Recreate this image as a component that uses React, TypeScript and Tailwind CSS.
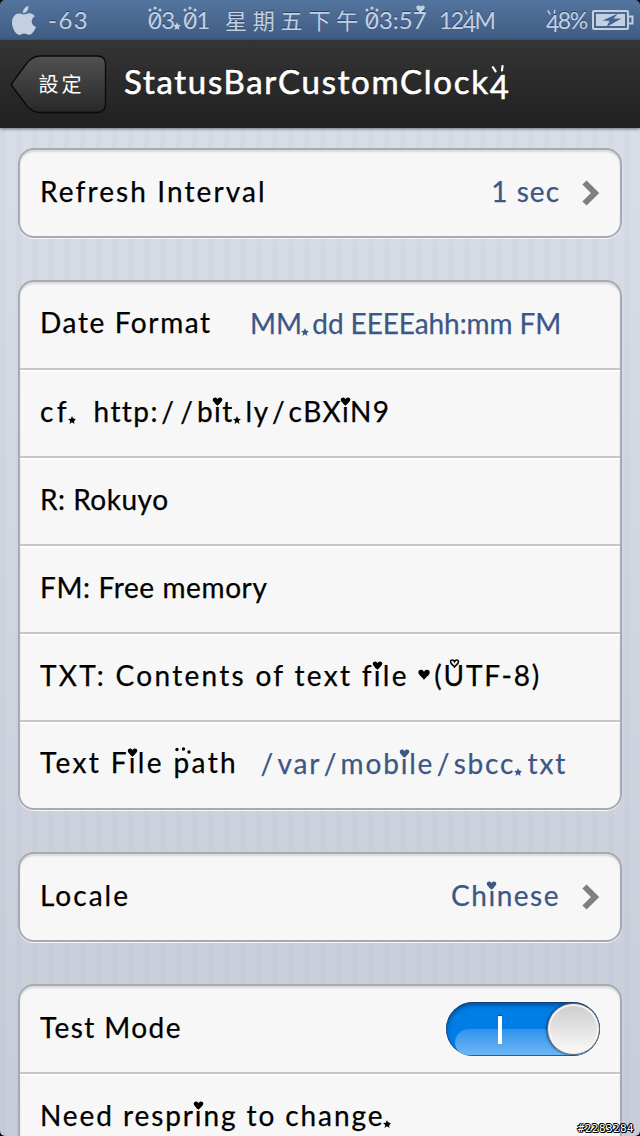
import type { ReactNode } from "react";

const STRIPES =
  "bg-[repeating-linear-gradient(90deg,rgba(120,140,170,0.045)_0px,rgba(120,140,170,0.045)_6px,transparent_6px,transparent_16px),linear-gradient(180deg,#d8dde7,#c7ccd8)]";

function Heart({ className }: { className: string }) {
  return (
    <svg viewBox="0 0 10 9" className={className} fill="currentColor">
      <path d="M5 9 C4 7 0 5 0.3 2.4 C0.6 0.2 4 -0.4 5 2.2 C6 -0.4 9.6 0.2 9.8 2.4 C10 5 6 7 5 9Z" />
    </svg>
  );
}

// Small ornaments that sit on top of certain characters
function Char({ c }: { c: string }) {
  if (c === "i") {
    return (
      <span className="relative">
        i
        <Heart className="absolute -left-[2px] top-[3px] h-[9px] w-[11px]" />
      </span>
    );
  }
  if (c === "7") {
    return (
      <span className="relative">
        7
        <Heart className="absolute left-[3px] top-0 h-[8px] w-[9px]" />
      </span>
    );
  }
  if (c === "/") {
    return <span className="mx-[2.5px]">/</span>;
  }
  if (c === ".") {
    return (
      <span className="relative mr-1">
        .
        <svg viewBox="0 0 10 10" className="absolute -left-[1px] bottom-[4px] h-[8px] w-[8px]" fill="currentColor">
          <path d="M5 0 L6.4 3.5 L10 3.8 L7.2 6.2 L8.1 10 L5 7.9 L1.9 10 L2.8 6.2 L0 3.8 L3.6 3.5Z" />
        </svg>
      </span>
    );
  }
  if (c === "0") {
    return (
      <span className="relative">
        0
        <svg viewBox="0 0 14 26" className="absolute left-0 top-[1px] h-[26px] w-[14px]" fill="currentColor">
          <circle cx="2" cy="4" r="1.5" />
          <circle cx="7" cy="2" r="1.6" />
          <circle cx="12" cy="4" r="1.5" />
          <path d="M4 19 L10 9" stroke="currentColor" strokeWidth="1.6" />
        </svg>
      </span>
    );
  }
  // the four hangs below the baseline, with two ticks above it
  if (c === "4") {
    return (
      <span className="relative inline-block translate-y-[0.15em]">
        4
        <svg viewBox="0 0 14 8" className="absolute left-0 -top-[0.02em] h-[0.26em] w-[0.5em]" fill="none" stroke="currentColor" strokeWidth="2" strokeLinecap="round">
          <path d="M2 2 L4.5 6 M11 1 L10.5 5" />
        </svg>
      </span>
    );
  }
  if (c === "U") {
    return (
      <span className="relative">
        U
        <svg viewBox="0 0 10 9" className="absolute left-[5px] top-[1px] h-[9px] w-[11px]" fill="none" stroke="currentColor" strokeWidth="1.6">
          <path d="M5 8 C4 6.5 1 5 1 2.6 C1 0.6 4 0.4 5 2.6 C6 0.4 9 0.6 9 2.6 C9 5 6 6.5 5 8Z" />
        </svg>
      </span>
    );
  }
  return <>{c}</>;
}

function Fancy({ text, className = "" }: { text: string; className?: string }) {
  return (
    <span className={"shrink-0 whitespace-pre " + className}>
      {text.split("").map((c, i) => (
        <Char key={i} c={c} />
      ))}
    </span>
  );
}

function Card({ children }: { children: ReactNode }) {
  return (
    <section className="shrink-0 overflow-hidden rounded-[16px] border-2 border-[#a5aab3] bg-[#f7f7f7] shadow-[0_1px_0_#f4f6f9,inset_0_2px_2px_rgba(0,0,0,0.12)]">
      {children}
    </section>
  );
}

function Row({ children, last = false }: { children: ReactNode; last?: boolean }) {
  return (
    <div
      className={
        "flex items-center px-5 pb-[5px] text-[28px] leading-[34px] text-black [-webkit-text-stroke:0.25px_currentColor] " +
        (last ? "h-[86px]" : "h-[88px] border-b-2 border-[#c6c6c6] shadow-[0_2px_0_#ffffff]")
      }
    >
      {children}
    </div>
  );
}

function Chevron() {
  return (
    <svg viewBox="0 0 18 26" className="ml-[22px] mt-[5px] h-[26px] w-[18px] shrink-0" fill="none" stroke="#7f7f7f" strokeWidth="6">
      <path d="M2.5 2.5 L13 13 L2.5 23.5" />
    </svg>
  );
}

function Switch() {
  return (
    <div className="relative mt-[5px] h-[54px] w-[154px] overflow-hidden rounded-full bg-[#017ee6] shadow-[inset_0_3px_5px_rgba(0,30,80,0.55),inset_0_0_0_1px_rgba(60,80,110,0.6)]">
      <div className="absolute bottom-[1px] left-[9px] h-[26px] w-[130px] rounded-tl-[16px] rounded-bl-[14px] bg-linear-to-b from-[#2c93ec] to-[#6db5f5]" />
      <div className="absolute left-[52px] top-[14px] h-[28px] w-[4px] bg-white shadow-[0_-1px_0_#0a4f94]" />
      <div className="absolute right-0 top-[1px] h-[52px] w-[53px] rounded-full border border-[#6a6a6a] bg-linear-to-b from-[#cdcdcd] to-[#fafafa] shadow-[-1px_0_2px_rgba(0,30,70,0.6),inset_0_0_0_2px_#f4f4f4]" />
    </div>
  );
}

function StatusBar() {
  return (
    <header className="flex h-10 shrink-0 items-center bg-linear-to-b from-[#54759f] to-[#3f5b82] text-[24px] leading-[28px] text-[#c3d0e1] [text-shadow:0_-1px_0_rgba(20,40,70,0.6)]">
      <svg viewBox="0 0 24 29" className="ml-3 h-[29px] w-[24px] shrink-0" fill="#c3d0e1">
        <path d="M16.5 0 C16.8 3.8 14 7.3 10.9 7.2 C10.5 3.8 13.5 0.5 16.5 0Z" />
        <path d="M12 8.6 C13.4 8.6 15 7.2 17.4 7.3 C19.6 7.4 21.6 8.5 22.8 10.3 C18.1 13.2 19 19.2 24 21 C22.8 24.2 20.2 28.6 17.4 28.7 C15.4 28.7 14.6 27.4 12.3 27.4 C9.9 27.4 9.1 28.7 7.2 28.8 C3.6 28.8 0 22 0 16.6 C0 10.6 3.8 7.4 7.2 7.4 C9.3 7.4 10.9 8.6 12 8.6Z" />
      </svg>
      <span className="ml-[12px] w-[100px] shrink-0 tracking-[1.5px]">-63</span>
      <Fancy text="03.01" className="w-[77px] tracking-[-0.8px]" />
      <span className="w-[140px] shrink-0 whitespace-nowrap pb-[2px] text-[22px] tracking-[5.8px] font-['Noto_Sans_CJK_TC',sans-serif]">星期五下午</span>
      <Fancy text="03:57" className="w-[74px] tracking-[0px]" />
      <Fancy text="124M" className="w-[107px] text-[23px] tracking-[-1.5px]" />
      <Fancy text="48%" className="w-[46px] text-[23px] tracking-[-1.5px]" />
      <svg viewBox="0 0 42 22" className="h-[22px] w-[42px] shrink-0" fill="none">
        <rect x="1" y="2" width="35" height="18" rx="1" stroke="#c3d0e1" strokeWidth="2" />
        <rect x="4" y="5" width="29" height="12" fill="#c3d0e1" />
        <path d="M37 7.5 H40.5 V14.5 H37" stroke="#c3d0e1" strokeWidth="2" />
        <path d="M26 4.5 L10.5 11.5 L17.5 12 L14.5 18 L29.5 9.5 L21.5 9.5Z" fill="#456591" />
      </svg>
    </header>
  );
}

function NavBar() {
  return (
    <nav className="relative flex h-[88px] shrink-0 items-center bg-linear-to-b from-[#353535] to-[#202020] shadow-[0_1px_3px_rgba(0,0,0,0.5)]">
      <button className="relative ml-[10px] flex h-[59px] w-[97px] shrink-0 items-center justify-center pl-[6px]">
        <svg viewBox="0 0 97 59" className="absolute inset-0 h-[59px] w-[97px]">
          <defs>
            <linearGradient id="back" x1="0" y1="0" x2="0" y2="1">
              <stop offset="0" stopColor="#515151" />
              <stop offset="1" stopColor="#282828" />
            </linearGradient>
          </defs>
          <path
            d="M1 29.5 L17 8 Q23 1 30 1 H87 Q95.5 1 95.5 9 V49 Q95.5 57.5 87 57.5 H30 Q23 57.5 17 51Z"
            fill="url(#back)"
            stroke="#090909"
            strokeWidth="1.3"
          />
        </svg>
        <span className="relative text-[20px] leading-6 tracking-[3px] text-white font-['Noto_Sans_CJK_TC',sans-serif]">設定</span>
      </button>
      <h1 className="ml-[17px] pb-[6px] text-[33px] leading-[40px] text-white [text-shadow:0_-1px_0_#000]">
        <Fancy text="StatusBarCustomClock4" className="tracking-[1.7px] [-webkit-text-stroke:0.6px_white]" />
      </h1>
    </nav>
  );
}

export default function App() {
  return (
    <div className="relative flex h-[1136px] w-[640px] flex-col overflow-hidden bg-black font-['Lato','Noto_Sans_CJK_TC',sans-serif]">
      <div className="flex h-full flex-col overflow-hidden rounded-[5px]">
        <StatusBar />
        <NavBar />
        <main className={"flex flex-1 flex-col gap-[42px] px-[18px] pt-5 " + STRIPES}>
          <Card>
            <Row last>
              <Fancy text="Refresh Interval" className="tracking-[2.1px]" />
              <Fancy text="1 sec" className="ml-auto tracking-[1px] text-[#3c5785]" />
              <Chevron />
            </Row>
          </Card>
          <Card>
            <Row>
              <Fancy text="Date Format" className="w-[210px] pb-[2px] tracking-[1.6px]" />
              <Fancy text="MM.dd EEEEahh:mm FM" className="tracking-[-0.1px] text-[#3c5785]" />
            </Row>
            <Row>
              <Fancy text="cf. " className="tracking-[3.3px]" />
              <Fancy text="http://bit.ly/cBXiN9" className="tracking-[1.4px]" />
            </Row>
            <Row>
              <Fancy text="R: Rokuyo" className="tracking-[0.5px]" />
            </Row>
            <Row>
              <Fancy text="FM: Free memory" className="tracking-[0.6px]" />
            </Row>
            <Row>
              <Fancy text="TXT: Contents of text file " className="tracking-[2.3px]" />
              <Heart className="mr-1 h-[11px] w-[12px] shrink-0" />
              <Fancy text="(UTF-8)" className="tracking-[1.8px]" />
            </Row>
            <Row last>
              <div className="relative w-[220px] shrink-0 pb-[2px]">
                <Fancy text="Text File path" className="tracking-[2.35px]" />
                {/* paw dots over the p of "path" */}
                <svg viewBox="0 0 16 8" className="absolute left-[135px] top-[2px] h-[8px] w-[16px]" fill="currentColor">
                  <circle cx="2" cy="2.500" r="1.700" />
                  <circle cx="8.500" cy="2" r="1.700" />
                  <circle cx="14" cy="5" r="1.700" />
                </svg>
              </div>
              <Fancy text="/var/mobile/sbcc.txt" className="-ml-[2px] tracking-[1.8px] text-[#3c5785]" />
            </Row>
          </Card>
          <Card>
            <Row last>
              <Fancy text="Locale" className="tracking-[2px]" />
              <Fancy text="Chinese" className="ml-auto tracking-[1.5px] text-[#3c5785]" />
              <Chevron />
            </Row>
          </Card>
          <Card>
            <Row>
              <Fancy text="Test Mode" className="tracking-[1.4px]" />
              <div className="ml-auto">
                <Switch />
              </div>
            </Row>
            <Row last>
              <Fancy text="Need respring to change." className="tracking-[1.9px]" />
            </Row>
          </Card>
        </main>
      </div>
      <span className="absolute bottom-[1px] right-[6px] text-[11px] leading-[13px] font-['DejaVu_Sans_Mono',monospace] tracking-[0.4px] text-white [text-shadow:1px_0_0_#000,-1px_0_0_#000,0_1px_0_#000,0_-1px_0_#000,1px_1px_0_#000,-1px_-1px_0_#000]">
        #2283284
      </span>
    </div>
  );
}
